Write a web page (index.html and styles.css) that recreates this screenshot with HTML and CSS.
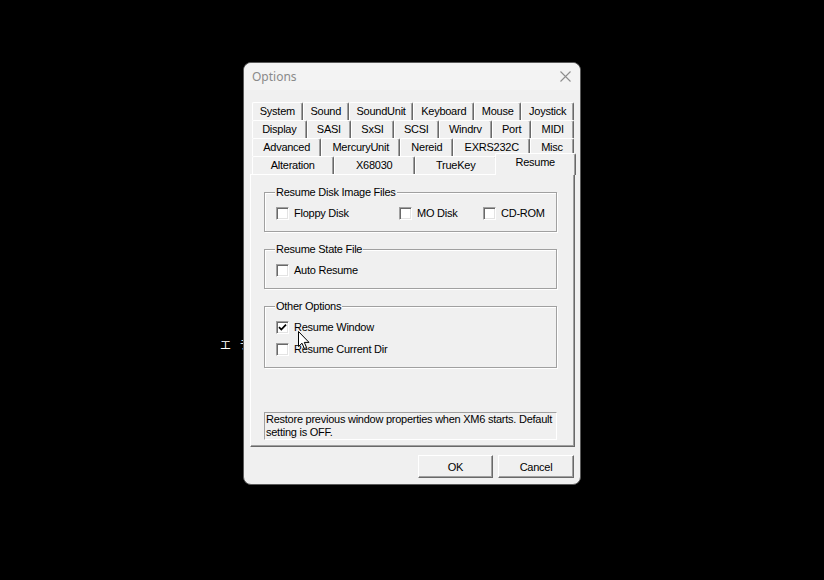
FILE: index.html
```html
<!DOCTYPE html>
<html>
<head>
<meta charset="utf-8">
<link rel="stylesheet" href="styles.css">
</head>
<body>
<div class="desk-text">エラ</div>
<div class="window">
  <div class="titlebar">
    <span class="title">Options</span>
    <svg class="close" width="11" height="11" viewBox="0 0 11 11"><path d="M0.5 0.5 L10.5 10.5 M10.5 0.5 L0.5 10.5" stroke="#8e8e8e" stroke-width="1.1" fill="none"/></svg>
  </div>
  <div class="content">
    <div class="tabs">
      <div class="tab-row">
        <div class="tab">System</div><div class="tab">Sound</div><div class="tab">SoundUnit</div><div class="tab">Keyboard</div><div class="tab">Mouse</div><div class="tab">Joystick</div>
      </div>
      <div class="tab-row">
        <div class="tab">Display</div><div class="tab">SASI</div><div class="tab">SxSI</div><div class="tab">SCSI</div><div class="tab">Windrv</div><div class="tab">Port</div><div class="tab">MIDI</div>
      </div>
      <div class="tab-row">
        <div class="tab">Advanced</div><div class="tab">MercuryUnit</div><div class="tab">Nereid</div><div class="tab">EXRS232C</div><div class="tab">Misc</div>
      </div>
      <div class="tab-row front">
        <div class="tab">Alteration</div><div class="tab">X68030</div><div class="tab">TrueKey</div><div class="tab selected">Resume</div>
      </div>
    </div>
    <div class="panel">
      <fieldset class="group">
        <legend>Resume Disk Image Files</legend>
        <div class="check-grid">
          <label class="check"><span class="box"></span>Floppy Disk</label>
          <label class="check"><span class="box"></span>MO Disk</label>
          <label class="check"><span class="box"></span>CD-ROM</label>
        </div>
      </fieldset>
      <fieldset class="group">
        <legend>Resume State File</legend>
        <div class="check-list">
          <label class="check"><span class="box"></span>Auto Resume</label>
        </div>
      </fieldset>
      <fieldset class="group">
        <legend>Other Options</legend>
        <div class="check-list">
          <label class="check"><span class="box"><svg width="9" height="9" viewBox="0 0 9 9"><path d="M1 4.2 L3.3 6.6 L8 1.6" stroke="#000" stroke-width="1.7" fill="none"/></svg></span>Resume Window</label>
          <label class="check"><span class="box"></span>Resume Current Dir</label>
        </div>
      </fieldset>
      <div class="desc">Restore previous window properties when XM6 starts. Default setting is OFF.</div>
    </div>
    <div class="buttons">
      <button class="btn ok">OK</button>
      <button class="btn cancel">Cancel</button>
    </div>
  </div>
  <svg class="cursor" width="13" height="19" viewBox="0 0 13 19"><path d="M0.5 0.5 L0.5 15.5 L4 12.2 L6.4 17.6 L8.6 16.6 L6.3 11.4 L11 11.4 Z" fill="#fff" stroke="#000" stroke-width="1" stroke-linejoin="round"/></svg>
</div>
</body>
</html>
```
FILE: styles.css
```css
html, body {
  margin: 0;
  padding: 0;
  background: #000;
  width: 824px;
  height: 580px;
  overflow: hidden;
}

.desk-text {
  position: absolute;
  left: 220px;
  top: 336px;
  color: #fff;
  font-family: "Noto Sans CJK JP", sans-serif;
  font-size: 11px;
  letter-spacing: 8px;
}

.window {
  position: absolute;
  left: 243px;
  top: 62px;
  width: 338px;
  height: 423px;
  box-sizing: border-box;
  background: #f0f0f0;
  border-radius: 8px;
  border: 1px solid #5a5a5a;
  font-family: "Liberation Sans", Arial, sans-serif;
  font-size: 11px;
  letter-spacing: -0.25px;
  color: #000;
}

.titlebar {
  height: 27px;
  display: flex;
  align-items: center;
  justify-content: space-between;
  padding: 0 9px 0 8px;
  background: #f3f3f3;
  border-radius: 8px 8px 0 0;
}

.title {
  font-family: "Noto Sans", "Open Sans", sans-serif;
  font-size: 12px;
  letter-spacing: 0;
  color: #8a8a8a;
  margin-top: -1px;
}

.close {
  display: block;
}

.content {
  padding: 12px 5px 0 6px;
}

.tabs {
  margin: 0 1px 0 2px;
}

.tab-row {
  display: flex;
  height: 18px;
  align-items: flex-end;
}

.tab {
  flex: 1 1 auto;
  height: 17px;
  line-height: 16px;
  padding: 0 6px;
  text-align: center;
  white-space: nowrap;
  border-top: 1px solid #fff;
  border-left: 1px solid #fff;
  border-right: 1px solid #696969;
  box-shadow: inset -1px 0 0 #a0a0a0;
  border-radius: 2px 2px 0 0;
  background: #f0f0f0;
}

.tab-row.front .tab {
  flex: 1 1 0;
}

.tab-row.front .tab.selected {
  position: relative;
  z-index: 1;
  line-height: 16px;
  margin: 0 -2px -1px -2px;
  padding-top: 0;
  box-sizing: content-box;
  height: 21px;
}

.panel {
  height: 260px;
  border-top: 1px solid #fff;
  border-left: 1px solid #fff;
  border-right: 1px solid #696969;
  border-bottom: 1px solid #696969;
  box-shadow: inset -1px -1px 0 #a0a0a0;
  padding: 11px 0 0 13px;
  box-sizing: content-box;
  width: 310px;
}

.group {
  margin: 0 0 11px 0;
  padding: 0 0 11px 11px;
  width: 293px;
  box-sizing: border-box;
  border: 1px solid #a0a0a0;
  box-shadow: inset 1px 1px 0 #fff, 1px 1px 0 #fff;
  min-width: 0;
}

.group legend {
  padding: 0 1px;
  margin-left: -1px;
  line-height: 13px;
  background: #f0f0f0;
}

.check-grid {
  display: grid;
  grid-template-columns: 123px 84px auto;
  margin-top: 8px;
}

.check-list {
  display: flex;
  flex-direction: column;
  gap: 9px;
  margin-top: 8px;
}

.check {
  display: flex;
  align-items: center;
  height: 13px;
  line-height: 13px;
  white-space: nowrap;
}

.box {
  width: 13px;
  height: 13px;
  box-sizing: border-box;
  background: #fff;
  border-top: 1px solid #a0a0a0;
  border-left: 1px solid #a0a0a0;
  border-right: 1px solid #fff;
  border-bottom: 1px solid #fff;
  box-shadow: inset 1px 1px 0 #696969, inset -1px -1px 0 #e3e3e3;
  margin-right: 5px;
  display: flex;
  align-items: center;
  justify-content: center;
}

.box svg {
  display: block;
}

.desc {
  margin-top: 44px;
  width: 293px;
  height: 28px;
  box-sizing: border-box;
  border-top: 1px solid #a0a0a0;
  border-left: 1px solid #a0a0a0;
  border-right: 1px solid #fff;
  border-bottom: 1px solid #fff;
  line-height: 13px;
  padding: 0 0 0 1px;
}

.buttons {
  display: flex;
  justify-content: flex-end;
  gap: 5px;
  margin-top: 8px;
  padding-right: 1px;
}

.btn {
  height: 23px;
  font-family: "Liberation Sans", Arial, sans-serif;
  font-size: 11px;
  letter-spacing: -0.25px;
  color: #000;
  background: #f0f0f0;
  border-top: 1px solid #fff;
  border-left: 1px solid #fff;
  border-right: 1px solid #696969;
  border-bottom: 1px solid #696969;
  box-shadow: inset -1px -1px 0 #a0a0a0;
  padding: 0;
  margin: 0;
}

.btn.ok {
  width: 75px;
}

.btn.cancel {
  width: 76px;
}

.cursor {
  position: absolute;
  left: 54px;
  top: 268px;
}
```
